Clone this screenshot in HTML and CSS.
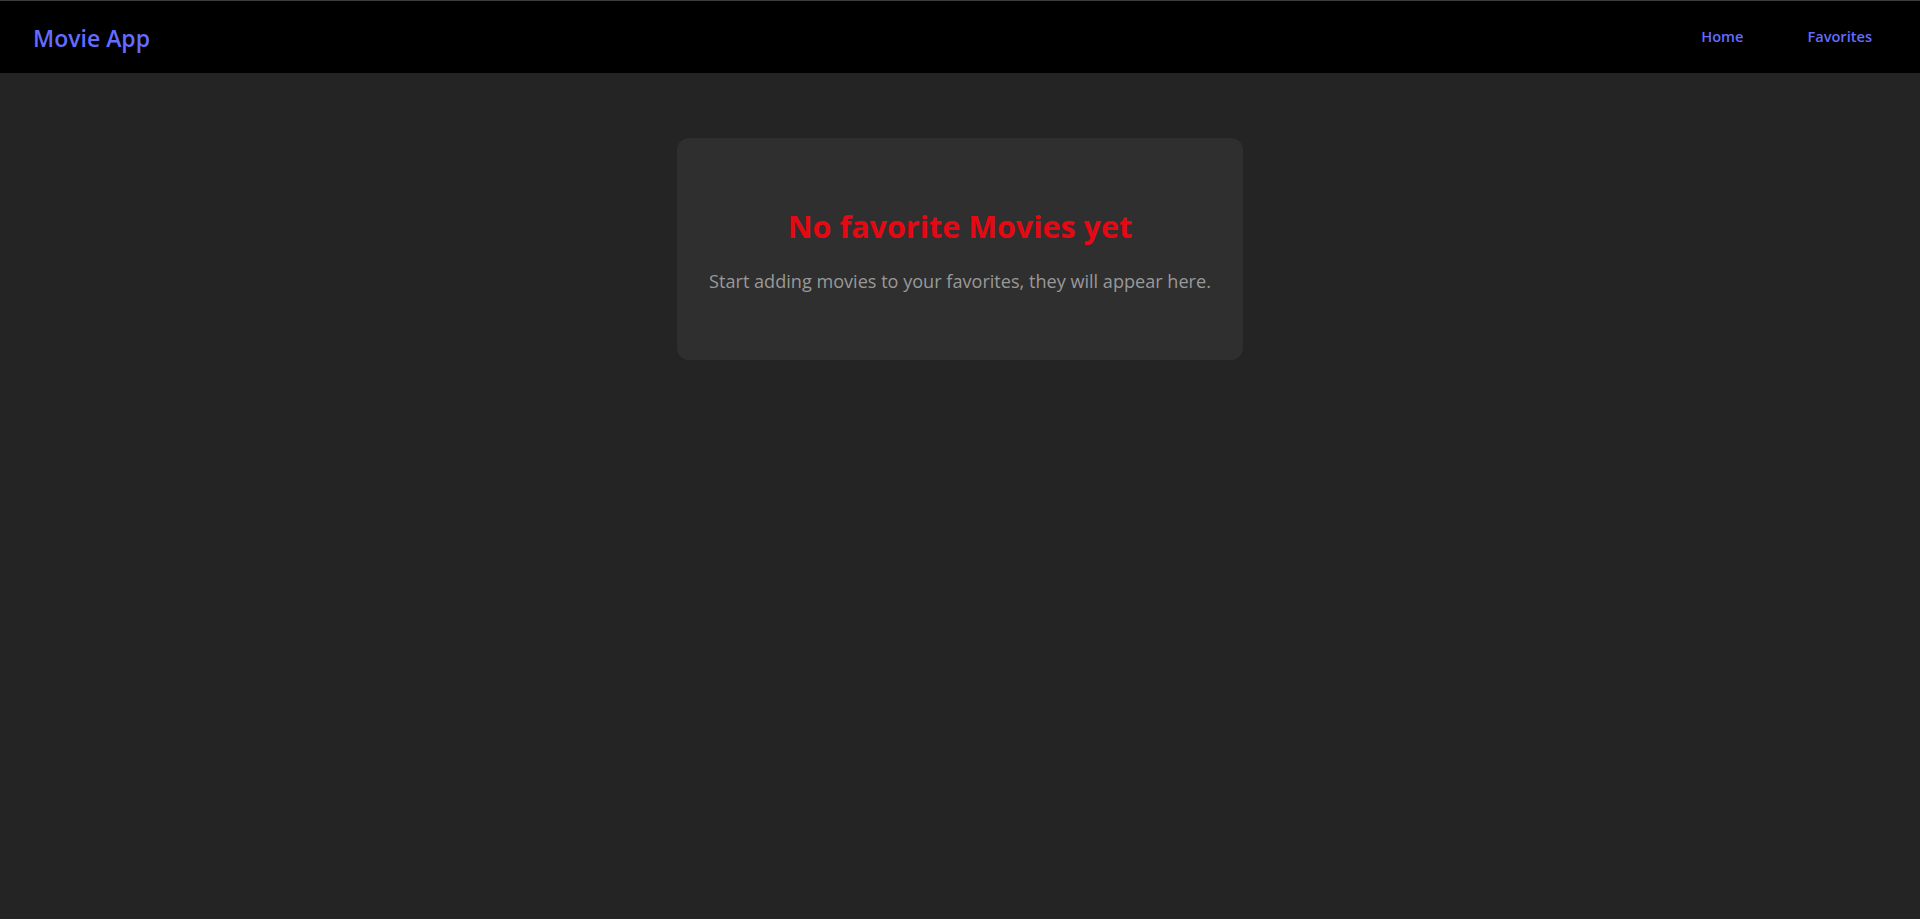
FILE: index.html
```html
<!DOCTYPE html>
<html lang="en">
<head>
<meta charset="UTF-8">
<title>Movie App</title>
<link rel="stylesheet" href="styles.css">
</head>
<body>
<div class="app">
  <nav class="navbar">
    <div class="navbar-brand"><a href="#">Movie App</a></div>
    <div class="navbar-links">
      <a href="#" class="nav-link">Home</a>
      <a href="#" class="nav-link">Favorites</a>
    </div>
  </nav>
  <main class="main-content">
    <div class="favorites-empty">
      <h2>No favorite Movies yet</h2>
      <p>Start adding movies to your favorites, they will appear here.</p>
    </div>
  </main>
</div>
</body>
</html>
```

FILE: styles.css
```css
* { box-sizing: border-box; }
html, body {
  margin: 0;
  padding: 0;
  background: #242424;
  font-family: "Open Sans", "Noto Sans", sans-serif;
  color: rgba(255,255,255,0.87);
}
.app {
  min-height: 100vh;
  border-top: 1px solid #3c3c3c;
}
a { text-decoration: none; color: #646cff; }
.navbar {
  background: #000;
  height: 72px;
  padding: 0 2rem;
  display: flex;
  justify-content: space-between;
  align-items: center;
}
.navbar-brand {
  font-size: 23px;
  font-weight: 600;
  line-height: 1;
  padding-left: 1px;
  padding-top: 2px;
}
.navbar-links {
  display: flex;
  gap: 2rem;
  padding-bottom: 2px;
}
.nav-link {
  font-size: 14.6px;
  font-weight: 600;
  padding: 0.5rem 1rem;
}
.main-content {
  padding: 2rem;
}
.favorites-empty {
  width: 566px;
  margin: 33px auto 0;
  padding: 64px 2rem;
  text-align: center;
  background: rgba(255,255,255,0.05);
  border-radius: 12px;
}
.favorites-empty h2 {
  margin: 0 0 16px;
  font-size: 30.5px;
  line-height: 48px;
  font-weight: 700;
  color: #e50914;
}
.favorites-empty p {
  margin: 0;
  font-size: 18.1px;
  line-height: 30px;
  color: #999;
}
```
